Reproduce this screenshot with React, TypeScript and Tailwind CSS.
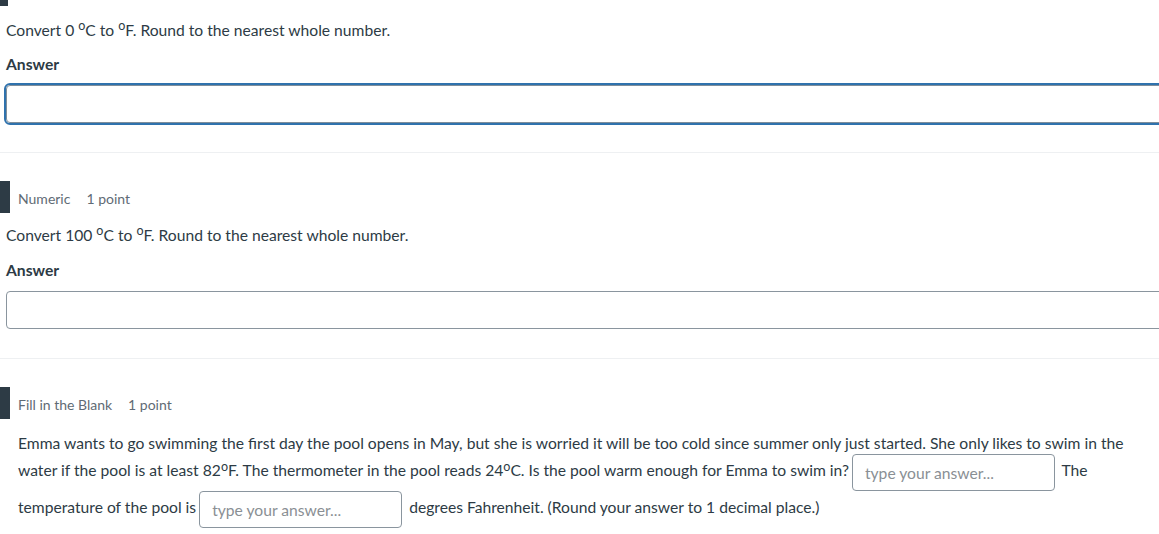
import { ReactNode } from "react";

const Deg = () => <sup className="text-[0.8em] top-[-0.45em]">o</sup>;

const QuestionHeader = ({ kind, points }: { kind: string; points: string }) => (
  <div className="flex items-center h-[32px]">
    <div className="w-[10px] h-[32px] bg-[#2d3b45]" />
    <span className="ml-[8px] mt-[3px] text-[14px] text-[#5f6b75]">{kind}</span>
    <span className="ml-[16px] mt-[3px] text-[14px] text-[#5f6b75]">{points}</span>
  </div>
);

const Divider = () => <div className="h-px bg-[#eef0f2] w-full" />;

const BlankInput = () => (
  <input
    placeholder="type your answer..."
    className="inline-block align-middle w-[203px] h-[37px] mx-[3px] px-[12px] border border-[#8a959e] rounded-[4px] text-[15.65px] placeholder:text-[#8a8f94] bg-white outline-none"
  />
);

const Block = ({ children }: { children: ReactNode }) => <div>{children}</div>;

const App = () => {
  return (
    <div className="w-[1159px] min-h-[534px] bg-white text-[#2d3b45] font-['Lato','Liberation_Sans',sans-serif] overflow-hidden">
      <div className="w-[8px] h-[6px] bg-[#2d3b45]" />
      <Block>
        <div className="pl-[6px]">
          <p className="mt-[13px] text-[15.65px] leading-[22px]">
            Convert 0 <Deg />C to <Deg />F. Round to the nearest whole number.
          </p>
          <p className="mt-[12px] text-[15.65px] leading-[22px] font-bold">Answer</p>
          <input className="mt-[10px] w-[1200px] h-[38px] border border-[#7f8e9a] rounded-[4px] outline-2 outline-[#2f72ad] outline-offset-0 px-3 text-[16px]" />
        </div>
      </Block>
      <div className="mt-[29px]">
        <Divider />
      </div>
      <div className="mt-[28px]">
        <QuestionHeader kind="Numeric" points="1 point" />
        <div className="pl-[6px]">
          <p className="mt-[11px] text-[15.65px] leading-[22px]">
            Convert 100 <Deg />C to <Deg />F. Round to the nearest whole number.
          </p>
          <p className="mt-[13px] text-[15.65px] leading-[22px] font-bold">Answer</p>
          <input className="mt-[10px] w-[1200px] h-[38px] border border-[#8a959e] rounded-[4px] outline-none px-3 text-[16px]" />
        </div>
      </div>
      <div className="mt-[29px]">
        <Divider />
      </div>
      <div className="mt-[28px]">
        <QuestionHeader kind="Fill in the Blank" points="1 point" />
        <div className="pl-[18px] w-[1140px]">
          <p className="mt-[13px] text-[15.65px] leading-[22px]">
            Emma wants to go swimming the first day the pool opens in May, but she is worried it will be too cold since summer only just started. She only likes to swim in the water if the pool is at least 82<Deg />F. The thermometer in the pool reads 24<Deg />C. Is the pool warm enough for Emma to swim in?
            <BlankInput /> The temperature of the pool is
            <BlankInput /> degrees Fahrenheit. (Round your answer to 1 decimal place.)
          </p>
        </div>
      </div>
    </div>
  );
};

export default App;
